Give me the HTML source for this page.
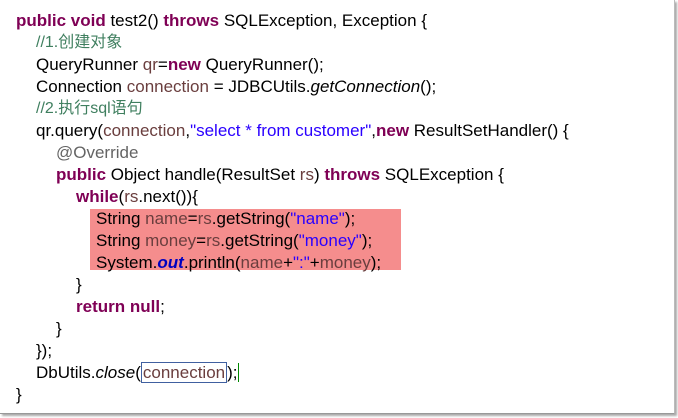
<!DOCTYPE html>
<html><head><meta charset="utf-8"><style>
body{margin:0;width:678px;height:418px;background:#fff;overflow:hidden;position:relative}
.panel{position:absolute;left:0;top:0;width:674px;height:413px;background:#fff;border-right:1px solid #bbb;border-bottom:1px solid #999;box-shadow:2px 2px 2px #aaa}
.l{position:absolute;left:0;height:22px;line-height:22px;white-space:pre;font-family:"Liberation Sans","Noto Sans CJK SC",sans-serif;font-size:17px;color:#000}
.k{color:#7f0055;font-weight:bold}.v{color:#6a3e3e}.s{color:#2a00ff}.c{color:#3f7f5f;font-size:16px}.o{color:#0000c0;font-weight:bold;font-style:italic}
.hl{position:absolute;left:90px;top:209px;width:311px;height:61px;background:#f58d8d}
.bx{border:1px solid #4060a0;padding:0 1px}
</style></head><body><div class="panel">
<div class="hl"></div>
<div class="l" style="top:10px;left:16px"><span class="k">public void</span> test2() <span class="k">throws</span> SQLException, Exception {</div>
<div class="l c" style="top:32px;left:36px">//1.创建对象</div>
<div class="l" style="top:54px;left:36px">QueryRunner <span class="v">qr</span>=<span class="k">new</span> QueryRunner();</div>
<div class="l" style="top:76px;left:36px">Connection <span class="v">connection</span> = JDBCUtils.<i>getConnection</i>();</div>
<div class="l c" style="top:98px;left:36px">//2.执行sql语句</div>
<div class="l" style="top:120px;left:36px">qr.query(<span class="v">connection</span>,<span class="s">"select * from customer"</span>,<span class="k">new</span> ResultSetHandler() {</div>
<div class="l" style="top:142px;left:56px;color:#646464">@Override</div>
<div class="l" style="top:164px;left:56px"><span class="k">public</span> Object handle(ResultSet <span class="v">rs</span>) <span class="k">throws</span> SQLException {</div>
<div class="l" style="top:186px;left:76px"><span class="k">while</span>(<span class="v">rs</span>.next()){</div>
<div class="l" style="top:208px;left:96px">String <span class="v">name</span>=<span class="v">rs</span>.getString(<span class="s">"name"</span>);</div>
<div class="l" style="top:230px;left:96px">String <span class="v">money</span>=<span class="v">rs</span>.getString(<span class="s">"money"</span>);</div>
<div class="l" style="top:252px;left:96px">System.<span class="o">out</span>.println(<span class="v">name</span>+<span class="s">":"</span>+<span class="v">money</span>);</div>
<div class="l" style="top:274px;left:76px">}</div>
<div class="l" style="top:296px;left:76px"><span class="k">return null</span>;</div>
<div class="l" style="top:318px;left:56px">}</div>
<div class="l" style="top:340px;left:36px">});</div>
<div class="l" style="top:362px;left:36px">DbUtils.<i>close</i>(<span class="v bx">connection</span>);<span style="border-left:1px solid #080"></span></div>
<div class="l" style="top:384px;left:16px">}</div>
</div></body></html>
